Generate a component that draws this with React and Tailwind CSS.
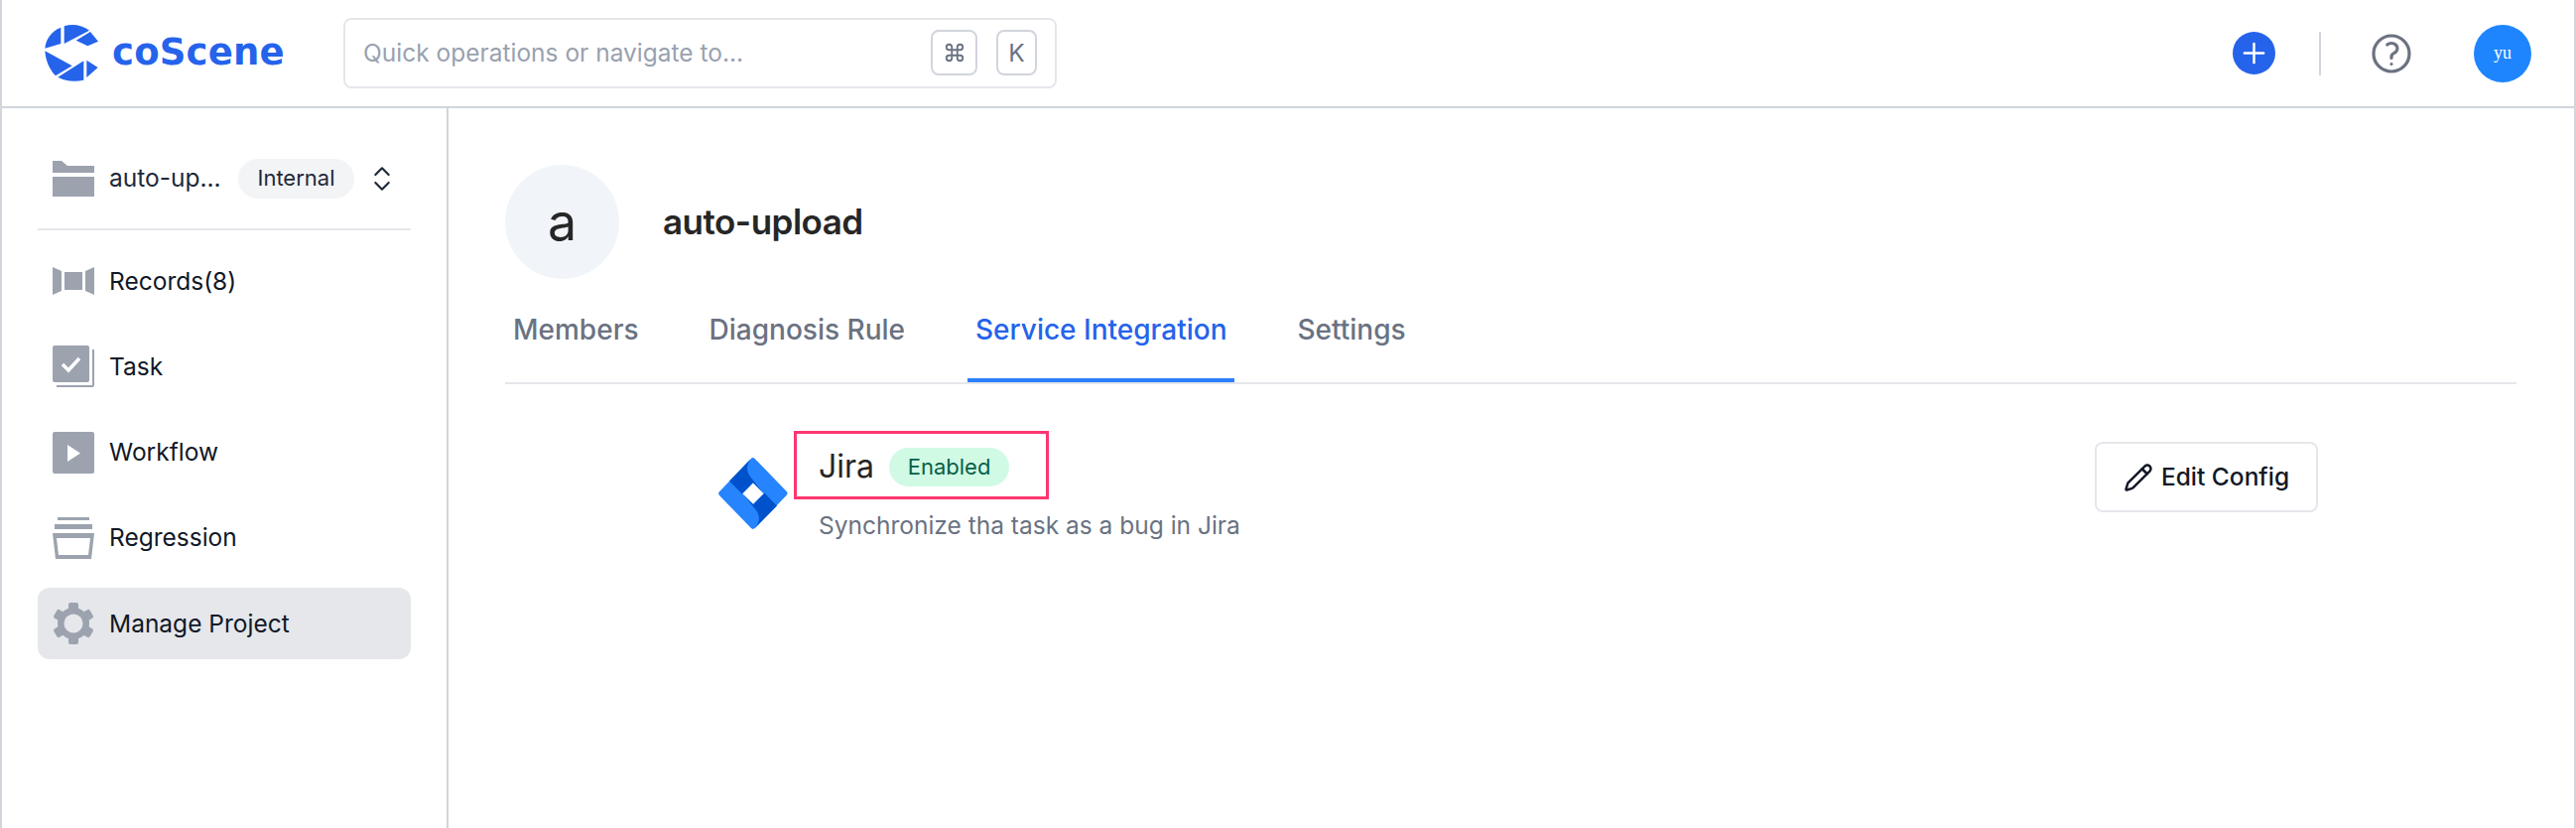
import { ChevronsUpDown, Command, Pencil, Plus } from 'lucide-react';

const FONT = 'font-[Inter,sans-serif]';

function FolderIcon() {
  return (
    <svg viewBox="0 0 42 36" className="w-[42px] h-[36px]" fill="#9ca3af">
      <path d="M0 0h9l6 5h27v7H0z" />
      <path d="M0 16h42v20H0z" />
    </svg>
  );
}

function RecordsIcon() {
  return (
    <svg viewBox="0 0 42 28" className="w-[42px] h-[28px]" fill="#9ca3af">
      <path d="M0 0l9 4v20l-9 4z" />
      <path d="M12 5h18v18H12z" />
      <path d="M42 0l-9 4v20l9 4z" />
    </svg>
  );
}

function TaskIcon() {
  return (
    <svg viewBox="0 0 42 42" className="w-[42px] h-[42px]">
      <rect width="37" height="37" rx="2" fill="#9ca3af" />
      <path d="M40 4h2v36a2 2 0 0 1-2 2H4v-2h36z" fill="#9ca3af" />
      <path d="M10 19l6 6 11-12" fill="none" stroke="#fff" strokeWidth="3.5" />
    </svg>
  );
}

function WorkflowIcon() {
  return (
    <svg viewBox="0 0 42 42" className="w-[42px] h-[42px]">
      <rect width="42" height="42" rx="2" fill="#9ca3af" />
      <path d="M15 13l13 8.5L15 30z" fill="#fff" />
    </svg>
  );
}

function RegressionIcon() {
  return (
    <svg viewBox="0 0 42 42" className="w-[42px] h-[42px]" fill="#9ca3af">
      <path d="M5 0h32v3H5z" />
      <path d="M2 7h38v5H2z" />
      <path fillRule="evenodd" d="M0 16h42l-3 26H3zM4 21l2 17h30l2-17z" />
    </svg>
  );
}

function GearIcon() {
  return (
    <svg viewBox="0 0 42 42" className="w-[42px] h-[42px]">
      <g fill="#9ca3af">
        <rect x="16" y="0" width="10" height="42" rx="2" />
        <rect x="16" y="0" width="10" height="42" rx="2" transform="rotate(60 21 21)" />
        <rect x="16" y="0" width="10" height="42" rx="2" transform="rotate(120 21 21)" />
        <circle cx="21" cy="21" r="16" />
      </g>
      <circle cx="21" cy="21" r="9.5" fill="#e5e7eb" />
    </svg>
  );
}

function LogoMark() {
  return (
    <svg viewBox="0 0 210 210" className="w-[70px] h-[70px]" fill="#2563eb">
      <path d="M64 29C36 40 18 64 16 92L64 78z" />
      <path d="M74 25C100 17 128 22 150 38L74 78z" />
      <path d="M110 68L153 42 177 71 145 85z" />
      <path d="M16 100L98 145 48 175C28 155 18 128 16 100z" />
      <path d="M55 179L133 130V188C106 194 78 192 55 179z" />
      <path d="M142 128L176 150 142 180z" />
    </svg>
  );
}

function JiraLogo() {
  return (
    <svg viewBox="0 0 70 72" className="w-[70px] h-[72px]">
      <path d="M32.6 1.2a3 3 0 0 1 4.3 0l31.6 32.6a3 3 0 0 1 0 4.3L37 70.8a3 3 0 0 1-4.3 0L1.2 38.2a3 3 0 0 1 0-4.3z" fill="#2684ff" />
      <path d="M11 23.6L32.6 1.2C27 9 28 15 34.5 22l10.7 14-10.7-10.4-10.7 11z" fill="#0052cc" />
      <path d="M59 48.4L37 70.8C43 63 42 57 35.5 50L24.8 36l10.7 10.4 10.7-11z" fill="#0052cc" />
      <path d="M35 25.6l10.6 10.6L35 46.8 24.4 36.2z" fill="#fff" />
    </svg>
  );
}

function NavItem({ icon, label, active }) {
  return (
    <div className={`h-[72px] rounded-xl flex items-center gap-[15px] px-[15px] text-[24.5px] text-[#111827] ${active ? 'bg-gray-200' : ''}`}>
      <span className="w-[42px] h-[42px] flex items-center justify-center shrink-0">{icon}</span>
      <span>{label}</span>
    </div>
  );
}

function Kbd({ children, className }) {
  return (
    <span className={`h-[46px] rounded-lg border-2 border-gray-300 flex items-center justify-center text-gray-500 text-[24.5px] ${className}`}>
      {children}
    </span>
  );
}

export default function App() {
  const tabs = ['Members', 'Diagnosis Rule', 'Service Integration', 'Settings'];

  return (
    <div className={`h-[834px] border-x-2 border-gray-300 bg-white flex flex-col overflow-hidden ${FONT}`}>
      {/* header */}
      <header className="h-[109px] shrink-0 border-b-2 border-gray-300 flex items-center pl-[38px] pr-[43px]">
        <div className="w-[306px] flex items-center gap-[3px] -mt-[2px]">
          <LogoMark />
          <span className="font-[DejaVu_Sans,sans-serif] font-bold text-[37px] leading-none tracking-[0.2px] text-[#2563eb]">coScene</span>
        </div>
        <div className="w-[719px] h-[71px] rounded-lg border-2 border-gray-200 flex items-center pl-[18px] pr-[18px] -mt-[1px]">
          <span className="flex-1 text-[24.5px] text-gray-400">Quick operations or navigate to...</span>
          <Kbd className="w-[47px]"><Command size={22} strokeWidth={2} /></Kbd>
          <Kbd className="w-[41px] ml-[19px]">K</Kbd>
        </div>
        <div className="ml-auto flex items-center">
          <span className="w-[43px] h-[43px] rounded-full bg-[#2563eb] flex items-center justify-center text-white">
            <Plus size={33} strokeWidth={1.8} />
          </span>
          <span className="w-[2px] h-[44px] bg-gray-300 ml-[44px]" />
          <svg viewBox="0 0 24 24" className="w-[48px] h-[48px] ml-[47px]" fill="none" stroke="#6b7280" strokeWidth="1.6" strokeLinecap="round" strokeLinejoin="round">
            <path d="M9.879 7.519c1.172-1.025 3.071-1.025 4.243 0 1.171 1.025 1.171 2.687 0 3.712-.204.179-.43.326-.67.442-.745.361-1.45.999-1.45 1.827v.75M21 12a9 9 0 1 1-18 0 9 9 0 0 1 18 0zm-9 5.25h.008v.008H12v-.008z" />
          </svg>
          <span className="w-[58px] h-[58px] rounded-full bg-[#1f85ff] ml-[59px] flex items-center justify-center text-white text-[18px] font-[Liberation_Serif,serif]">yu</span>
        </div>
      </header>

      <div className="flex-1 flex min-h-0">
        {/* sidebar */}
        <aside className="w-[450px] shrink-0 border-r-2 border-gray-300 pl-[36px] pr-[36px]">
          <div className="h-[123px] pt-[20px] border-b-2 border-gray-200 flex items-center pl-[15px]">
            <FolderIcon />
            <span className="ml-[15px] w-[130px] text-[24.5px] text-gray-800">auto-up...</span>
            <span className="h-[40px] w-[117px] rounded-full bg-gray-100 flex items-center justify-center text-[22px] text-gray-800">Internal</span>
            <ChevronsUpDown size={32} strokeWidth={1.6} className="ml-[12px] text-gray-800" />
          </div>
          <nav className="mt-[15px] flex flex-col gap-[14.25px]">
            <NavItem icon={<RecordsIcon />} label="Records(8)" />
            <NavItem icon={<TaskIcon />} label="Task" />
            <NavItem icon={<WorkflowIcon />} label="Workflow" />
            <NavItem icon={<RegressionIcon />} label="Regression" />
            <NavItem icon={<GearIcon />} label="Manage Project" active />
          </nav>
        </aside>

        {/* main */}
        <main className="flex-1 min-w-0 pl-[57px] pr-[58px] pt-[57px] relative">
          <div className="flex items-center gap-[44px]">
            <div className="w-[115px] h-[115px] rounded-full bg-[#f1f5f9] flex items-center justify-center text-[52px] text-[#262626]">a</div>
            <h1 className="text-[35px] font-semibold text-[#262626] tracking-[-0.5px]">auto-upload</h1>
          </div>

          <div className="mt-[20px] h-[86px] border-b-2 border-gray-200 flex gap-[55px]">
            {tabs.map((tab) => (
              <div
                key={tab}
                className={`h-[84px] px-[8px] pb-[18px] flex items-center text-[28px] font-medium border-b-4 ${tab === 'Service Integration' ? 'border-blue-500 text-[#2563eb]' : 'border-transparent text-gray-500'}`}
              >
                {tab}
              </div>
            ))}
          </div>

          <div className="mt-[47px] ml-[215px] mr-[200px] flex items-start relative">
            <div className="mt-[27px] shrink-0"><JiraLogo /></div>
            <div className="ml-[31px]">
              <div className="flex items-center gap-[15px] h-[72px]">
                <span className="text-[32px] text-[#262626]">Jira</span>
                <span className="h-[39px] w-[121px] rounded-full bg-[#d1fae5] text-[#065f46] text-[22px] flex items-center justify-center">Enabled</span>
              </div>
              <p className="mt-[5px] text-[24.5px] text-gray-500">Synchronize tha task as a bug in Jira</p>
            </div>
            <button className="ml-auto mt-[11px] w-[225px] h-[71px] rounded-lg border-2 border-gray-200 flex items-center justify-center gap-[8px] text-[24.5px] font-medium text-[#111827]">
              <Pencil size={30} strokeWidth={2} />
              Edit Config
            </button>
            {/* annotation frame */}
            <div className="absolute left-[76px] top-0 w-[257px] h-[69px] border-[3px] border-[#ff3670]" />
          </div>
        </main>
      </div>
    </div>
  );
}
